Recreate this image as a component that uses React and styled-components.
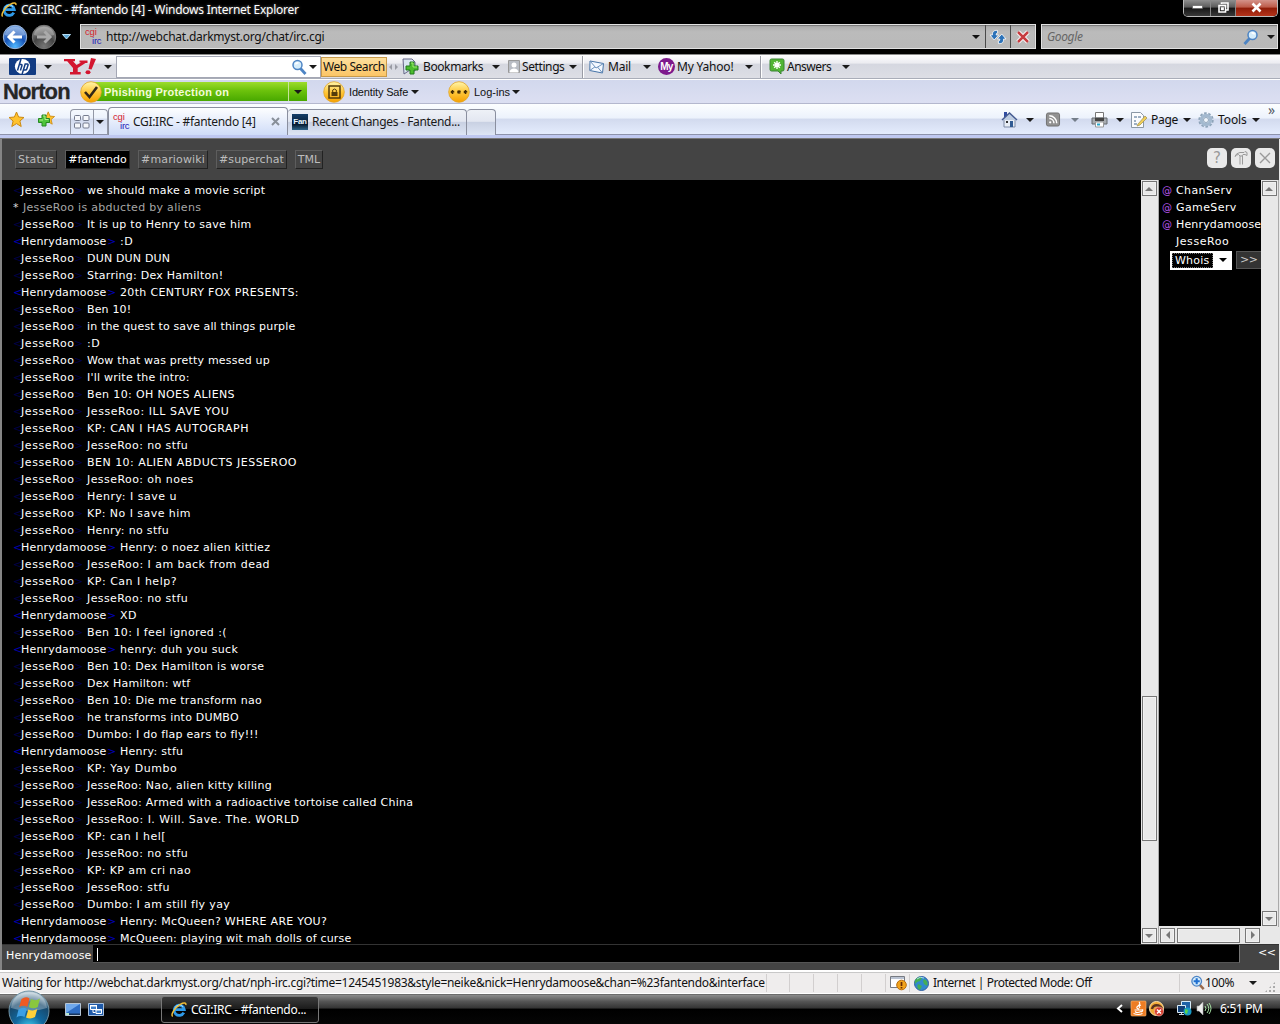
import React from "react";
import styled, { createGlobalStyle, css } from "styled-components";

const Global = createGlobalStyle`
  html, body { margin: 0; padding: 0; background: #000; overflow: hidden; }
  * { box-sizing: border-box; }
  svg { display: block; flex: none; overflow: visible; }
`;

const ui = `"Noto Sans", "Open Sans", "Liberation Sans", sans-serif`;
const verdana = `"DejaVu Sans", "Liberation Sans", sans-serif`;

const Screen = styled.div`
  width: 1280px; height: 1024px; display: flex; flex-direction: column;
  background: #000; overflow: hidden; font: 12px/16px ${ui}; color: #111; cursor: default;
`;
const Label = styled.span`
  display: block; flex: none; white-space: nowrap;
  width: ${p => p.$w ? p.$w + "px" : "auto"};
  letter-spacing: ${p => p.$ls || 0}px;
  font-size: ${p => p.$size || 12}px;
  font-style: ${p => p.$italic ? "italic" : "normal"};
  color: ${p => p.$color || "inherit"};
  margin-left: ${p => p.$ml || 0}px;
`;
const IconBox = styled.span`
  display: flex; flex: none; align-items: center; justify-content: center;
  width: ${p => p.$w || 16}px; margin-left: ${p => p.$ml || 0}px; padding-top: ${p => p.$pt || 0}px;
`;
const Caret = styled.i`
  flex: none; width: 0; height: 0; border: 4px solid transparent; border-bottom: 0;
  border-top-color: ${p => p.$color || "#1a1a1a"}; margin-left: ${p => p.$ml || 0}px;
`;

/* ---------- window frame ---------- */
const TitleBar = styled.header`
  height: 21px; flex: none; display: flex; align-items: flex-start; color: #fff; background: #000;
`;
const TitleText = styled.div`
  margin: 2px 0 0 4px; white-space: nowrap; font-size: 12px; letter-spacing: -0.25px; text-shadow: 0 0 3px #777;
`;
const WindowButtons = styled.div`
  display: flex; margin-left: auto; margin-right: 2px; height: 17px; border: 1px solid #bbb; border-top: 0;
  border-radius: 0 0 5px 5px; overflow: hidden;
`;
const WindowButton = styled.div`
  width: ${p => p.$w}px; display: flex; align-items: center; justify-content: center; padding-bottom: 2px;
  border-left: ${p => p.$first ? 0 : "1px solid #888"};
  background: ${p => p.$close
    ? "linear-gradient(#d4938a 0, #bd5a48 45%, #8f1c08 50%, #b5341b 100%)"
    : "linear-gradient(#8f8f8f 0, #5a5a5a 45%, #151515 50%, #3a3a3a 100%)"};
`;
const AddressRow = styled.div`
  height: 33px; flex: none; display: flex; align-items: flex-start; padding: 3px 2px 0 2px; background: #000;
`;
const Field = styled.div`
  height: 25px; display: flex; align-items: center; width: ${p => p.$w}px; flex: none;
  margin-left: ${p => p.$ml}px;
  border: 1px solid #e2e2e2; background: linear-gradient(#a9a9a9, #bbb 30%, #b9b9b9);
  box-shadow: inset 0 1px 1px #777;
`;
const FieldButton = styled.div`
  width: ${p => p.$w || 25}px; height: 23px; border-left: 1px solid #4a4a4a; display: flex; align-items: center; justify-content: center;
  margin-left: ${p => p.$ml || 0}px;
`;

/* ---------- toolbars ---------- */
const YahooBar = styled.div`
  height: 25px; flex: none; display: flex; align-items: center; border-top: 1px solid #8a8a8a; border-bottom: 1px solid #a9adb8;
  background: linear-gradient(#fdfdfe 0, #ececf1 35%, #d5d7e0 40%, #dddee5 100%);
`;
const YahooSearch = styled.div`
  width: 205px; height: 22px; margin-left: 4px; flex: none; background: #fff; border: 1px solid #a4a7b4;
  display: flex; align-items: center; justify-content: flex-end; padding-right: 3px;
`;
const WebSearch = styled.div`
  width: 66px; height: 20px; flex: none; border: 1px solid #c89a4a; background: linear-gradient(#fddf9d, #fbc566);
  padding-left: 1px; line-height: 17px; white-space: nowrap; letter-spacing: -0.45px;
`;
const Divider = styled.i`
  width: 2px; height: 22px; flex: none; background: #9a9ca5; border-right: 1px solid #fff; margin-left: ${p => p.$ml}px;
`;
const NortonBar = styled.div`
  height: 25px; flex: none; display: flex; align-items: center; border-top: 1px solid #fff; border-bottom: 1px solid #b4b8ce;
  background: linear-gradient(#d2d8ed, #dcdff2); font-family: "Liberation Sans", sans-serif;
`;
const NortonName = styled.div`
  width: 80px; padding-left: 3px; font: bold 22px/24px "Liberation Sans", sans-serif; letter-spacing: -0.9px; color: #262626;
  flex: none; -webkit-text-stroke: 0.3px #262626;
`;
const CoinOverlap = styled.span`
  display: flex; flex: none; width: 22px; position: relative; z-index: 1;
`;
const Phishing = styled.div`
  width: 216px; height: 19px; flex: none; margin-left: -11px; display: flex; align-items: center;
  background: linear-gradient(#9ddc2c, #6cc20c 45%, #48a800); color: #f3fbd8; font-weight: bold; font-size: 11px;
`;
const PhishingText = styled.span`
  width: 197px; padding-left: 13px; white-space: nowrap; letter-spacing: 0.22px; flex: none;
`;
const PhishingMenu = styled.span`
  height: 19px; width: 19px; border-left: 1px solid #c6e39a; display: flex; align-items: center; justify-content: center;
`;
const TabBar = styled.div`
  height: 31px; flex: none; display: flex; align-items: flex-start; border-bottom: 1px solid #8d93ab;
  background: linear-gradient(#fcfeff 0, #ecf2fc 47%, #d2daee 50%, #e4ecfd 100%);
`;
const TabEdge = styled.div`height: 4px; flex: none; background: #bfc8f0; border-bottom: 1px solid #777;`;
const QuickTabs = styled.div`
  display: flex; width: 38px; height: 26px; margin: 5px 0 0 15px; flex: none; border: 1px solid #9297a5; border-bottom: 0; border-radius: 4px 4px 0 0;
`;
const QuickCell = styled.div`
  width: ${p => p.$w}px; display: flex; align-items: center; justify-content: center; padding-bottom: 2px;
  border-left: ${p => p.$line ? "1px solid #9297a5" : 0};
`;
const Tab = styled.div`
  width: ${p => p.$w}px; height: ${p => p.$active ? 28 : 26}px; margin-top: ${p => p.$active ? 3 : 5}px; flex: none;
  display: flex; align-items: center; border: 1px solid #8a8f9f; border-bottom: 0; border-left-width: ${p => p.$active ? 1 : 0}px;
  border-radius: 4px 4px 0 0; color: #1a1a1a; padding-bottom: ${p => p.$active ? 0 : 1}px;
  background: ${p => p.$active ? "linear-gradient(#fdfeff, #cfdcf8)" : "linear-gradient(#eef1f7 0, #e3e7f1 45%, #c9d1e3 50%, #dde5f4 100%)"};
`;
const Commands = styled.div`
  display: flex; align-items: center; height: 31px; margin-left: auto; width: 279px; flex: none;
`;
const Chevrons = styled.span`align-self: flex-start; margin: -2px 0 0 8px; color: #555c66; font-size: 14px;`;

/* ---------- chat page ---------- */
const Page = styled.main`
  height: 831px; flex: none; border-left: 2px solid #858585; border-right: 1px solid #e8e8e8; background: #444; font: 11px/17px ${verdana};
  display: flex; flex-direction: column; color: #fff;
`;
const ChannelBar = styled.nav`
  height: 41px; flex: none; display: flex; align-items: center; padding: 0 4px 0 13px; gap: 8px;
`;
const Channel = styled.span`
  height: 19px; width: ${p => p.$w}px; border: 1px solid; border-color: #5d5d5d #222 #222 #5d5d5d; text-align: center; white-space: nowrap;
  line-height: 18px; color: ${p => p.$on ? "#fff" : "#bdbdbd"}; background: ${p => p.$on ? "#000" : "#444"};
  letter-spacing: ${p => p.$ls || 0}px;
`;
const PageTools = styled.div`display: flex; gap: 4px; margin: -3px 0 0 auto;`;
const PageTool = styled.span`
  width: 20px; height: 20px; border-radius: 5px; background: #e9e9e9; display: flex; align-items: center; justify-content: center;
  color: #999; font-size: 15px;
`;
const ChatArea = styled.div`display: flex; height: 764px; flex: none; background: #000;`;
const Log = styled.div`width: 1139px; flex: none; height: 764px; overflow: hidden; padding: 2px 0 0 11px;`;
const Line = styled.div`
  height: 17px; display: flex; white-space: nowrap; color: ${p => p.$action ? "#a6a6a6" : "#fff"}; letter-spacing: ${p => p.$action ? 0.3 : 0}px;
`;
const Bracket = styled.span`width: ${p => p.$close ? 9 : 8}px; flex: none; color: ${p => p.$dim ? "#000048" : "#0000b4"};`;
const Nick = styled.span`width: ${p => p.$long ? 86 : 53}px; flex: none; letter-spacing: ${p => p.$long ? 0.17 : 0.6}px;`;
const Said = styled.span`margin-left: 4px; letter-spacing: ${p => p.$ls}px;`;
const Star = styled.span`width: 10px; color: #ddd;`;

const scrollFace = css`border: 1px solid #777; background: #e9e9e9; box-shadow: inset 0 0 0 1px #f2f2f2;`;
const ScrollBar = styled.div`
  width: 18px; height: ${p => p.$h}px; flex: none; background: #e8e8e8; display: flex; flex-direction: column; align-items: center;
  padding: 1px 1px 1px 0; border-right: 1px solid #aaa;
`;
const ScrollButton = styled.span`
  ${scrollFace} width: 15px; height: 15px; flex: none; display: flex; align-items: center; justify-content: center;
`;
const ScrollThumb = styled.span`${scrollFace} width: 15px; height: 145px; margin-top: 500px; flex: none;`;
const Filler = styled.span`flex: 1;`;
const Corner = styled.div`display: flex; flex-direction: column; height: 764px; background: #e8e8e8;`;
const UserPane = styled.div`width: 102px; flex: none; display: flex; flex-direction: column; overflow: hidden;`;
const Users = styled.div`flex: 1; padding-top: 2px;`;
const User = styled.div`height: 17px; display: flex; padding-left: 3px; white-space: nowrap; letter-spacing: ${p => p.$ls || 0}px;`;
const Op = styled.span`width: 14px; flex: none; color: #b455e8; font-size: 10px; letter-spacing: 0;`;
const WhoisRow = styled.div`display: flex; padding: 0 0 0 11px; gap: 4px; height: 20px; align-items: center;`;
const Select = styled.span`
  width: 62px; height: 19px; flex: none; background: #fff; padding: 2px; display: flex; align-items: center;
`;
const Selected = styled.b`
  width: 41px; height: 15px; padding-left: 3px; background: #000; color: #fff; font-weight: normal; line-height: 15px; outline: 1px dotted #777; outline-offset: -1px;
  letter-spacing: 0.2px;
`;
const Go = styled.span`
  width: 30px; height: 18px; flex: none; background: #333; border: 1px solid #555; color: #ccc; line-height: 16px; padding-left: 3px; letter-spacing: -0.4px;
`;
const HorizontalScroll = styled.div`
  height: 18px; background: #e8e8e8; display: flex; align-items: center; padding-left: 1px; gap: 2px;
`;
const HorizontalThumb = styled.span`${scrollFace} width: 63px; height: 15px; margin-right: 3px;`;
const InputRow = styled.div`height: 26px; flex: none; display: flex; align-items: flex-start; border-top: 1px solid #333;`;
const InputNick = styled.span`width: 91px; padding: 2px 0 0 4px; flex: none; letter-spacing: 0.17px;`;
const Entry = styled.div`
  width: 1147px; height: 18px; flex: none; background: #000; border-right: 1px solid #777; border-bottom: 1px solid #555; padding: 3px 0 0 4px;
`;
const TextCursor = styled.i`display: block; width: 1px; height: 13px; background: #fff;`;
const Collapse = styled.span`margin-left: 18px; letter-spacing: -0.4px; line-height: 15px;`;

/* ---------- status and task bars ---------- */
const StatusBar = styled.footer`
  height: 24px; flex: none; display: flex; align-items: center; background: #efeded; border-top: 2px solid #fff; border-bottom: 1px solid #fff;
  box-shadow: inset 0 1px 0 #c8c8c8; padding-top: 1px;
`;
const StatusText = styled.span`
  width: 766px; flex: none; padding-left: 2px; white-space: nowrap; letter-spacing: -0.29px;
`;
const StatusCell = styled.span`
  width: ${p => p.$w || 24}px; height: 18px; flex: none; border-left: 1px solid #d2cfcf; display: flex; align-items: center; white-space: nowrap;
  padding-left: ${p => p.$pl || 0}px;
`;
const Grip = styled.span`
  width: 10px; height: 10px; margin-left: 8px; align-self: flex-end;
  background: radial-gradient(circle at 1px 1px, #aaa 1px, transparent 1.2px) 0 0 / 4px 4px; clip-path: polygon(100% 0, 100% 100%, 0 100%);
`;
const TaskBar = styled.div`
  height: 30px; flex: none; display: flex; align-items: center; color: #fff;
  background: linear-gradient(#555 0, #8a8a8a 4%, #555 25%, #333 47%, #000 50%, #050505 100%);
`;
const Start = styled.div`width: 44px; height: 30px; margin-left: 8px; flex: none; position: relative; z-index: 1;`;
const StartOrb = styled.span`position: absolute; left: 0; bottom: -8px;`;
const TaskButton = styled.div`
  width: 158px; height: 27px; margin-left: 57px; flex: none; border: 1px solid #777; border-radius: 3px; display: flex; align-items: center;
  padding: 1px 0 0 9px; background: linear-gradient(#3c3c3c, #1b1b1b 47%, #000 50%, #111);
`;
const Tray = styled.div`display: flex; align-items: center; margin-left: auto; width: 164px; flex: none; height: 26px; padding-bottom: 1px;`;

/* ---------- icons ---------- */
const IE = ({ s = 16 }) => (
  <svg width={s} height={s} viewBox="0 0 16 16" fill="none">
    <path d="M12.8 10.6a5.1 5.1 0 1 1 .5-3H4.5" stroke="#2f9ae8" strokeWidth="2.8" />
    <path d="M12 4.7a4.8 4.8 0 0 0-8.3 1.8" stroke="#a5e0ff" strokeWidth="1" />
    <path d="M1.7 14.5C-.6 12.8 3.8 5.5 9.3 2.3 12.5.4 15.4.4 14.8 3" stroke="#f0bd38" strokeWidth="1.5" />
  </svg>
);
const NavCircle = ({ dim }) => (
  <svg width="26" height="26" viewBox="0 0 26 26">
    <defs>
      <radialGradient id={dim ? "nd" : "nb"} cx=".5" cy=".9" r=".9">
        <stop offset="0" stopColor={dim ? "#777" : "#50b8ff"} /><stop offset=".5" stopColor={dim ? "#444" : "#1853b5"} />
        <stop offset="1" stopColor={dim ? "#999" : "#7aa8e6"} />
      </radialGradient>
    </defs>
    <circle cx="13" cy="13" r="11.7" fill={`url(#${dim ? "nd" : "nb"})`} stroke={dim ? "#777" : "#9fb7d8"} />
    <path d="M3 11C4 0 22 0 23 11Q13 14 3 11" fill="#fff" opacity=".28" />
    <path d={dim ? "M6 13h13M13.5 7.5 19 13l-5.500 5.500" : "M20 13H7M12.500 7.500 7 13l5.500 5.500"} fill="none" stroke={dim ? "#aaa" : "#fff"} strokeWidth="3" />
  </svg>
);
const CgiMark = styled.span`
  display: grid; grid-template-rows: 9px 8px; width: 18px; flex: none; margin-left: ${p => p.$ml || 0}px;
  font: 9.500px/8px "Liberation Sans", sans-serif; color: #d5222e; letter-spacing: -0.2px;
  & > i { font-style: normal; color: #1e20b8; padding-left: 7px; }
`;
const Cgi = ({ ml }) => <CgiMark $ml={ml}>cgi<i>irc</i></CgiMark>;
const MirrorBox = styled.span`display: flex; transform: ${p => p.$flip ? "scaleX(-1)" : "none"};`;
const Magnifier = ({ c = "#4d84c4", flip, plus }) => (
  <MirrorBox $flip={flip}>
    <svg width={plus ? 14 : 16} height={plus ? 14 : 16} viewBox="0 0 16 16" fill="none">
      <path d="M9.500 9.500 14.500 15" stroke={plus ? "#9a6a4a" : c} strokeWidth="2.800" />
      <circle cx="6.500" cy="6" r={plus ? 5.5 : 4.5} fill="#d6edfb" stroke={c} strokeWidth="1.500" />
      {plus ? <path d="M6.500 2.500v7M3 6h7" stroke="#1f6fd0" strokeWidth="2.400" /> : <path d="M4.500 5.500a2.500 2.500 0 0 1 3-1.500" stroke="#fff" strokeWidth="1.500" />}
    </svg>
  </MirrorBox>
);
const Refresh = () => (
  <svg width="16" height="14" viewBox="0 0 16 14" stroke="#fff" strokeWidth=".8" fill="#2c72b8">
    <path d="M7.500.500C4 0 2.300 1.500 2.400 5H0l4.200 5L8.700 5H6.200c0-1.500.3-2 1.500-2z" />
    <path d="M8.500 13.500c3.500.5 5.200-1 5.100-4.500H16l-4.200-5L7.300 9h2.500c0 1.500-.3 2-1.500 2z" />
  </svg>
);
const Stop = () => (
  <svg width="14" height="14" viewBox="0 0 14 14"><path d="M2 2l10 10M12 2 2 12" stroke="#fff" strokeWidth="4.500" /><path d="M2 2l10 10M12 2 2 12" stroke="#c63c40" strokeWidth="2.500" /></svg>
);
const HpLogo = () => (
  <svg width="27" height="17" viewBox="0 0 27 17">
    <rect width="27" height="17" rx="1" fill="#123c83" /><circle cx="13.500" cy="8.500" r="7.600" fill="#fff" />
    <g fill="none" stroke="#123c83" strokeWidth="1.500"><path d="M12 1 8.500 12.500M10.200 6.500h2.100q1 0 .6 1.300l-1.500 4.700" /><path d="M13 16.500 16.200 6h2.100q1.100 0 .7 1.300l-1.200 3.700q-.3 1-1.400 1h-1.600" /></g>
  </svg>
);
const YahooLogo = () => (
  <svg width="32" height="17" viewBox="0 0 32 17" fill="#d3152f">
    <path d="M0 1h11v2.300H9L12.500 7 17 4.500h-1.500V2.500h8V5h-2L13.700 10v4h3v2.500H6V14h3v-4L3.200 3.300H0zM27 0l5 1-4.500 10.500-3-.5z" />
    <ellipse cx="24" cy="14.300" rx="2.500" ry="2" />
  </svg>
);
const Bookmark = () => (
  <svg width="17" height="17" viewBox="0 0 17 17"><path d="M1 1h9l3 3v9l-5-1-6 4z" fill="#d8e6f0" stroke="#668" /><path d="M8 4h4v4h4v4h-4v4H8v-4H4V8h4z" fill="#4bbd2c" stroke="#237b1d" /><path d="M9 5h2v4h4" fill="none" stroke="#a0eb70" /></svg>
);
const Bust = () => (
  <svg width="12" height="13" viewBox="0 0 12 13"><path d="M.5.500h11v12H.5z" fill="#b9bdc4" stroke="#999" /><circle cx="6" cy="5" r="2.500" fill="#fff" /><path d="M1.500 12.500c0-5.500 9-5.500 9 0z" fill="#fff" /></svg>
);
const Mail = () => (
  <svg width="16" height="16" viewBox="0 0 16 16"><path d="M1 2 14.500 4.500 13.500 14 .8 11.500z" fill="#f3f8ff" stroke="#4774a8" /><path d="m1 2 6 7 7.500-4.500M.8 11.500 6 7.800M13.500 14 8.500 8" fill="none" stroke="#6c91bc" /></svg>
);
const Badge = styled.span`
  width: 17px; height: 17px; border-radius: 50%; background: #7d198c; color: #fff; font: bold 10px/17px "Liberation Sans", sans-serif; text-align: center; letter-spacing: -0.6px;
`;
const AnswersIcon = () => (
  <svg width="16" height="17" viewBox="0 0 16 17"><path d="M2.500 1h11q1.500 0 1.500 1.500v9q0 1.500-1.500 1.500H12v3l-3-3H2.500Q1 13 1 11.500v-9Q1 1 2.500 1" fill="#52b535" stroke="#3b8434" /><path d="M8 3v8M4 7h8M5.200 4.200l5.600 5.600M10.800 4.200 5.200 9.800" stroke="#fff" strokeWidth="1.400" /></svg>
);
const GoldCoin = ({ children }) => (
  <svg width="22" height="22" viewBox="0 0 22 22">
    <defs><linearGradient id="gold" x2="0" y2="1"><stop stopColor="#fff6ac" /><stop offset=".5" stopColor="#ffc83c" /><stop offset="1" stopColor="#f6a000" /></linearGradient></defs>
    <circle cx="11" cy="11" r="10.300" fill="url(#gold)" stroke="#e2a526" strokeWidth=".8" />{children}
  </svg>
);
const Star5 = ({ plus }) => (
  <svg width="17" height="17" viewBox="0 0 17 17">
    <path d="m8.500 1 2.100 5 5.400.5-4.100 3.500 1.300 5.500-4.700-2.900-4.700 2.900 1.300-5.500L1 6.500 6.400 6z" fill="#ffc22e" stroke="#cc8a12" transform={plus ? "translate(3 0) scale(.85)" : undefined} />
    {plus && <path d="M4 4h4v3.500h3.500v4H8V15H4v-3.500H.5v-4H4z" fill="#4fc53c" stroke="#248822" />}
    {plus && <path d="M5 5h2v3.500h3.500M1.500 9H5" fill="none" stroke="#b4ee8e" />}
  </svg>
);
const Grid = () => (
  <svg width="16" height="14" viewBox="0 0 16 14" fill="#f5f7fb" stroke="#747b8e"><rect x=".5" y=".5" width="6" height="5" rx="1" /><rect x="9" y=".5" width="6" height="5" rx="1" /><rect x=".5" y="8" width="6" height="5" rx="1" /><rect x="9" y="8" width="6" height="5" rx="1" /></svg>
);
const FanBadge = styled.span`
  width: 16px; height: 16px; background: linear-gradient(#163f68, #061b31 65%, #31668a); color: #eaf7ff; font: bold 8px/16px "Liberation Sans", sans-serif; text-align: center; margin-left: 4px; flex: none; letter-spacing: -0.3px;
`;
const Home = () => (
  <svg width="17" height="17" viewBox="0 0 17 17"><path d="M3 8h11v8H3z" fill="#e8edf5" stroke="#7c8aa5" /><path d="M3 1h3v5H3z" fill="#304ca0" /><path d="M1 9 8.500 2 16 9" fill="#bccbe0" stroke="#455b91" strokeWidth="1.500" /><path d="M9 10h3v6H9z" fill="#315b94" /><path d="M5 10h2v2H5z" fill="#333" /></svg>
);
const Feed = () => (
  <svg width="14" height="15" viewBox="0 0 15 15"><rect x=".5" y=".5" width="14" height="14" rx="2" fill="#919191" stroke="#6e6e6e" /><circle cx="4.500" cy="10.500" r="1.200" fill="#fff" /><path d="M3.500 6.500a5 5 0 0 1 5 5M3.500 3.500a8 8 0 0 1 8 8" fill="none" stroke="#fff" strokeWidth="1.600" /></svg>
);
const Printer = () => (
  <svg width="17" height="16" viewBox="0 0 17 16"><path d="M4.500.5h8V6h-8z" fill="#fff" stroke="#777" /><path d="M1 6h15v6H1z" fill="#a9adb2" stroke="#656b70" /><path d="M4 6h9v3H4z" fill="#444" /><path d="M4.500 10h8v5h-8z" fill="#fff" stroke="#999" /><path d="M6 12.500h3" stroke="#25a4c9" strokeWidth="2" /></svg>
);
const PageIcon = () => (
  <svg width="16" height="16" viewBox="0 0 16 16"><path d="M.5.500h9l3 3v12H.5z" fill="#fbfcfd" stroke="#8b98a5" /><path d="M3 5h3M3 9h2M3 12h3M7 5h3" stroke="#8096b0" strokeWidth="1.500" /><path d="m7 12 7-8 2 2-7 7-3 1z" fill="#f1cf58" stroke="#9d8f50" strokeWidth=".7" /></svg>
);
const Gear = () => (
  <svg width="16" height="16" viewBox="0 0 16 16"><circle cx="8" cy="8" r="6.800" fill="none" stroke="#8da3b8" strokeWidth="1.800" strokeDasharray="2.600 1.670" /><circle cx="8" cy="8" r="4.600" fill="#d9e6f1" stroke="#a3b9cf" strokeWidth="3.200" /><circle cx="8" cy="8" r="2.500" fill="#f0f6fc" stroke="#7d93ab" strokeWidth=".8" /></svg>
);
const Triangle = ({ turn = 0 }) => (
  <svg width="8" height="8" viewBox="0 0 8 8"><path d="M0 6 4 2l4 4z" fill="#777" transform={`rotate(${turn} 4 4)`} /></svg>
);
const Globe = () => (
  <svg width="15" height="15" viewBox="0 0 15 15"><circle cx="7.500" cy="7.500" r="7" fill="#3189cc" stroke="#315fa2" /><path d="M3 2q4-2 5 0l-2 3-3 1-2 2Q0 4 3 2M4 8l4 2-2 4Q2 12 4 8M10 3q5 2 3 7l-3-2-1-3z" fill="#45ae55" /><path d="M3 3Q6 0 10 2" fill="none" stroke="#c7edff" opacity=".8" /></svg>
);
const BlockedPage = () => (
  <svg width="17" height="16" viewBox="0 0 17 16"><path d="M.5 1.500h14v11H.5z" fill="#fff" stroke="#777b82" /><path d="M1 2h13v2H1z" fill="#bac3d3" /><circle cx="11.500" cy="10" r="4.800" fill="#f2a31b" stroke="#b86c0d" /><path d="M11.500 7v4M11.500 12v1.400" stroke="#6a2c05" strokeWidth="1.700" /></svg>
);
const WindowsOrb = () => (
  <svg width="42" height="42" viewBox="0 0 42 42">
    <defs><radialGradient id="orb" cx=".5" cy=".95" r=".9"><stop stopColor="#42d6f5" /><stop offset=".4" stopColor="#11689f" /><stop offset=".75" stopColor="#17496d" /><stop offset="1" stopColor="#b8cbd6" /></radialGradient></defs>
    <circle cx="21" cy="21" r="20" fill="url(#orb)" stroke="#7193a5" />
    <path d="M3 18C5-3 37-3 39 18Q21 24 3 18" fill="#fff" opacity=".3" />
    <path d="M13.500 9q4.500-3 8-.5l-2.200 8.500q-4.500-2.500-8.200.3z" fill="#ee5a24" /><path d="M23 9q4.500 2.500 9-.5L29.800 17q-4.500 2.500-9 0z" fill="#89c73d" />
    <path d="M10.500 19.500q4.500-3 8.300-.5l-2.300 8q-4-2.200-8 .5z" fill="#3c9fe5" /><path d="M20.300 19.500q4.500 2.200 9-.5l-2.300 8q-4.300 2.500-9 .5z" fill="#ffd03a" />
  </svg>
);
const Desktop = () => (
  <svg width="16" height="13" viewBox="0 0 16 13"><path d="M.5.500h15v12H.5z" fill="#2f6ec5" stroke="#b6c5d4" /><path d="M1 1h14L1 10z" fill="#70a9ec" /><path d="M1 10.500h14v1.500H1z" fill="#17345c" /><path d="M1 10h3v2H1z" fill="#b7e8cb" /></svg>
);
const Switcher = () => (
  <svg width="16" height="13" viewBox="0 0 16 13"><path d="M.5.500h15v12H.5z" fill="#1f5aa9" stroke="#a7bfdb" /><path d="M2.500 2.500h6v4h-6zM8 6.500h5.500v4H8z" fill="#3d7ec9" stroke="#fff" /><path d="M2 2h7v1.500H2zM7.500 6h6.500v1.500H7.500z" fill="#fff" /><path d="M5 7v2.500h2.500" fill="none" stroke="#fff" /></svg>
);
const Java = () => (
  <svg width="15" height="15" viewBox="0 0 15 15"><rect width="15" height="15" rx="1" fill="#ed7d24" stroke="#ffbd73" strokeWidth=".6" /><path d="M8 1q2 2-1 4t1 3M10 4Q7 5 9 7M3.500 9h7q2-1 1 1l-1.500 1M4 10.500q2 2 6 0M2.500 12.500q5 2 9 0" fill="none" stroke="#fff" strokeWidth="1.100" /></svg>
);
const NortonTray = () => (
  <svg width="16" height="16" viewBox="0 0 16 16"><circle cx="7.500" cy="7.500" r="7" fill="#f1aa37" stroke="#ffe5ae" /><path d="M3 8c1-5 8-5 10 0" stroke="#5b331d" strokeWidth="2.400" fill="none" /><circle cx="10" cy="10.500" r="4.500" fill="#d53a2b" stroke="#f2b5a7" strokeWidth=".7" /><path d="m8 8.500 4 4m0-4-4 4" stroke="#fff" strokeWidth="1.500" /></svg>
);
const Network = () => (
  <svg width="15" height="15" viewBox="0 0 15 15"><path d="M4.500.500h9v8h-9z" fill="#1f63a7" stroke="#d8ebf7" /><path d="M.5 4.500h8v7h-8z" fill="#123f76" stroke="#d8ebf7" /><path d="M2 13.500h5M4.500 12v2" stroke="#c8d9e3" /><circle cx="10.500" cy="10.500" r="4" fill="#1998c4" /><path d="m8 8 3 1-1 4-2-1z" fill="#5dd64b" /></svg>
);
const Speaker = () => (
  <svg width="15" height="15" viewBox="0 0 15 15"><path d="M1 5h2l4-4v13l-4-4H1z" fill="#eee" stroke="#aaa" strokeWidth=".6" /><path d="M9 5q2 2.500 0 5M11 3q3.500 4.500 0 9M13 2q4 5.500 0 11" fill="none" stroke="#a9e5a6" /></svg>
);

const J = "JesseRoo", H = "Henrydamoose";
const lines = [
  [J, "we should make a movie script", 0.25], ["*", "JesseRoo is abducted by aliens"], [J, "It is up to Henry to save him", 0.28], [H, ":D", 0.5],
  [J, "DUN DUN DUN", 0.18], [J, "Starring: Dex Hamilton!", 0.26], [H, "20th CENTURY FOX PRESENTS:", 0.35], [J, "Ben 10!", 0.15],
  [J, "in the quest to save all things purple", 0.16], [J, ":D", 0.5], [J, "Wow that was pretty messed up", 0.2], [J, "I'll write the intro:", 0.24],
  [J, "Ben 10: OH NOES ALIENS", 0.37], [J, "JesseRoo: ILL SAVE YOU", 0.57], [J, "KP: CAN I HAS AUTOGRAPH", 0.52], [J, "JesseRoo: no stfu", 0.41],
  [J, "BEN 10: ALIEN ABDUCTS JESSEROO", 0.48], [J, "JesseRoo: oh noes", 0.43], [J, "Henry: I save u", 0.5], [J, "KP: No I save him", 0.45], [J, "Henry: no stfu", 0.32],
  [H, "Henry: o noez alien kittiez", 0.26], [J, "JesseRoo: I am back from dead", 0.45], [J, "KP: Can I help?", 0.52], [J, "JesseRoo: no stfu", 0.41], [H, "XD", 0.5],
  [J, "Ben 10: I feel ignored :(", 0.4], [H, "henry: duh you suck", 0.36], [J, "Ben 10: Dex Hamilton is worse", 0.27], [J, "Dex Hamilton: wtf", 0.24],
  [J, "Ben 10: Die me transform nao", 0.3], [J, "he transforms into DUMBO", 0.2], [J, "Dumbo: I do flap ears to fly!!!", 0.26], [H, "Henry: stfu", 0.27],
  [J, "KP: Yay Dumbo", 0.58], [J, "JesseRoo: Nao, alien kitty killing", 0.28], [J, "JesseRoo: Armed with a radioactive tortoise called China", 0.27],
  [J, "JesseRoo: I. Will. Save. The. WORLD", 0.46], [J, "KP: can I hel[", 0.5], [J, "JesseRoo: no stfu", 0.41], [J, "KP: KP am cri nao", 0.42], [J, "JesseRoo: stfu", 0.42],
  [J, "Dumbo: I am still fly yay", 0.36], [H, "Henry: McQueen? WHERE ARE YOU?", 0.27], [H, "McQueen: playing wit mah dolls of curse", 0.2],
];

function ChatLine({ who, text, spacing }) {
  if (who === "*") return <Line $action><Star>*</Star>{text}</Line>;
  return (
    <Line>
      <Bracket $dim={who === J}>&lt;</Bracket><Nick $long={who === H}>{who}</Nick>
      <Bracket $close $dim={who === J}>&gt;</Bracket><Said $ls={spacing}>{text}</Said>
    </Line>
  );
}

export default function App() {
  return (
    <Screen>
      <Global />
      <TitleBar>
        <IconBox $ml={1} $pt={2}><IE /></IconBox>
        <TitleText>CGI:IRC - #fantendo [4] - Windows Internet Explorer</TitleText>
        <WindowButtons>
          <WindowButton $w={26} $first><svg width="11" height="4"><path d="M.5.500h10v3H.5z" fill="#fff" stroke="#555" strokeWidth=".6" /></svg></WindowButton>
          <WindowButton $w={25}><svg width="11" height="11" fill="none" stroke="#fff" strokeWidth="1.600"><path d="M3.500 2V1H10v7H8" /><path d="M1 3.500h6.500V10H1zM3.600 6h1.500v1.500H3.600z" /></svg></WindowButton>
          <WindowButton $w={42} $close><svg width="11" height="9"><path d="m1.500.5 8 8m0-8-8 8" stroke="#fff" strokeWidth="2.600" /></svg></WindowButton>
        </WindowButtons>
      </TitleBar>
      <AddressRow>
        <IconBox $w={26}><NavCircle /></IconBox>
        <IconBox $w={26} $ml={3}><NavCircle dim /></IconBox>
        <IconBox $w={10} $ml={4} $pt={10}><svg width="9" height="6"><path d="M.5.500h8L4.500 5z" fill="#5da9d8" stroke="#b6def5" strokeWidth="1" /></svg></IconBox>
        <Field $w={956} $ml={9}>
          <Cgi ml={4} />
          <Label $w={866} $ml={3} $ls={-0.25}>http://webchat.darkmyst.org/chat/irc.cgi</Label>
          <Caret $color="#111" /><FieldButton $w={25} $ml={5}><Refresh /></FieldButton><FieldButton $w={26}><Stop /></FieldButton>
        </Field>
        <Field $w={237} $ml={5}>
          <Label $w={196} $ml={5} $ls={-0.35} $color="#666" $italic>Google</Label>
          <Magnifier flip /><Caret $ml={8} />
        </Field>
      </AddressRow>
      <YahooBar>
        <IconBox $w={27} $ml={9}><HpLogo /></IconBox><Caret $ml={8} />
        <IconBox $w={32} $ml={12}><YahooLogo /></IconBox><Caret $ml={8} />
        <YahooSearch><Magnifier /><Caret $ml={2} /></YahooSearch>
        <WebSearch>Web Search</WebSearch>
        <IconBox $w={11} $ml={1}><svg width="9" height="6" fill="#9a9ca5"><path d="M3 0v6L0 3zM6 0v6l3-3z" /></svg></IconBox>
        <IconBox $w={17} $ml={3}><Bookmark /></IconBox><Label $w={69} $ml={4} $ls={-0.4}>Bookmarks</Label><Caret />
        <IconBox $w={12} $ml={8}><Bust /></IconBox><Label $w={47} $ml={2} $ls={-0.4}>Settings</Label><Caret />
        <Divider $ml={5} />
        <IconBox $ml={5}><Mail /></IconBox><Label $w={37} $ml={3} $ls={-0.2}>Mail</Label><Caret $ml={-2} />
        <IconBox $w={17} $ml={7}><Badge>My</Badge></IconBox><Label $w={69} $ml={2} $ls={-0.2}>My Yahoo!</Label><Caret $ml={-1} />
        <Divider $ml={7} />
        <IconBox $ml={7}><AnswersIcon /></IconBox><Label $w={56} $ml={2} $ls={-0.5}>Answers</Label><Caret $ml={-1} />
      </YahooBar>
      <NortonBar>
        <NortonName>Norton</NortonName>
        <CoinOverlap><GoldCoin><path d="m5 11 4.500 5L17 6" fill="none" stroke="#322617" strokeWidth="2.600" /></GoldCoin></CoinOverlap>
        <Phishing><PhishingText>Phishing Protection on</PhishingText><PhishingMenu><Caret /></PhishingMenu></Phishing>
        <IconBox $w={22} $ml={16}><GoldCoin><path d="M6 5h11v12H6z" fill="none" stroke="#543d0b" strokeWidth="1.500" /><path d="M8.500 11h6v4h-6z" fill="#543d0b" /><path d="M9.700 11V9q1.800-2 3.600 0v2" fill="none" stroke="#543d0b" /></GoldCoin></IconBox>
        <Label $w={63} $ml={4} $size={11} $ls={-0.15}>Identity Safe</Label><Caret $ml={-1} />
        <IconBox $w={22} $ml={29}><GoldCoin><path d="M4.500 9v4M2.800 10l3.400 2M2.800 12l3.400-2M11 9v4M9.300 10l3.400 2M9.300 12l3.400-2M17.500 9v4M15.800 10l3.400 2M15.800 12l3.400-2" stroke="#432b04" strokeWidth="1.100" /></GoldCoin></IconBox>
        <Label $w={39} $ml={4} $size={11}>Log-ins</Label><Caret $ml={-1} />
      </NortonBar>
      <TabBar>
        <IconBox $w={17} $ml={8} $pt={7}><Star5 /></IconBox>
        <IconBox $w={17} $ml={13} $pt={7}><Star5 plus /></IconBox>
        <QuickTabs><QuickCell $w={23}><Grid /></QuickCell><QuickCell $w={15} $line><Caret /></QuickCell></QuickTabs>
        <Tab $w={180} $active><Cgi ml={4} /><Label $w={138} $ml={2} $ls={-0.31}>CGI:IRC - #fantendo [4]</Label><svg width="9" height="9"><path d="m1 1 7 7m0-7-7 7" stroke="#888f99" strokeWidth="2" /></svg></Tab>
        <Tab $w={179}><FanBadge>Fan</FanBadge><Label $w={150} $ml={4} $ls={-0.33}>Recent Changes - Fantend...</Label></Tab>
        <Tab $w={29} />
        <Commands>
          <Home /><Caret $ml={8} />
          <IconBox $ml={11}><Feed /></IconBox><Caret $ml={10} $color="#747e89" />
          <IconBox $w={17} $ml={12}><Printer /></IconBox><Caret $ml={8} />
          <IconBox $ml={7}><PageIcon /></IconBox><Label $w={31} $ml={4} $ls={-0.25}>Page</Label><Caret $ml={1} />
          <IconBox $ml={7}><Gear /></IconBox><Label $w={33} $ml={4} $ls={-0.1}>Tools</Label><Caret $ml={1} />
          <Chevrons>»</Chevrons>
        </Commands>
      </TabBar>
      <TabEdge />
      <Page>
        <ChannelBar>
          <Channel $w={42} $ls={0.15}>Status</Channel><Channel $w={65}  $on>#fantendo</Channel><Channel $w={70} $ls={0.15}>#mariowiki</Channel><Channel $w={71} $ls={0.1}>#superchat</Channel><Channel $w={28}>TML</Channel>
          <PageTools>
            <PageTool>?</PageTool>
            <PageTool><svg width="14" height="14" fill="none" stroke="#999"><path d="M1 5.500Q2 2 6 1.500h4l1-1 2 1v3l-2-1H9L8 5H6L4.500 3.500Q2.500 3.500 1 5.500M6 5v8.500M8.500 5v8.500" /></svg></PageTool>
            <PageTool><svg width="12" height="12"><path d="m1 1 10 10m0-10L1 11" stroke="#999" strokeWidth="1.400" /></svg></PageTool>
          </PageTools>
        </ChannelBar>
        <ChatArea>
          <Log>{lines.map(([who, text, spacing], i) => <ChatLine key={i} who={who} text={text} spacing={spacing} />)}</Log>
          <ScrollBar $h={764}><ScrollButton><Triangle /></ScrollButton><ScrollThumb /><Filler /><ScrollButton><Triangle turn={180} /></ScrollButton></ScrollBar>
          <UserPane>
            <Users>
              <User $ls={0.4}><Op>@</Op>ChanServ</User><User $ls={0.4}><Op>@</Op>GameServ</User><User $ls={0.15}><Op>@</Op>Henrydamoose</User><User $ls={0.55}><Op />JesseRoo</User>
              <WhoisRow><Select><Selected>Whois</Selected><Caret $ml={6} $color="#000" /></Select><Go>&gt;&gt;</Go></WhoisRow>
            </Users>
            <HorizontalScroll><ScrollButton><Triangle turn={-90} /></ScrollButton><HorizontalThumb /><ScrollButton><Triangle turn={90} /></ScrollButton></HorizontalScroll>
          </UserPane>
          <Corner><ScrollBar $h={747}><ScrollButton><Triangle /></ScrollButton><Filler /><ScrollButton><Triangle turn={180} /></ScrollButton></ScrollBar></Corner>
        </ChatArea>
        <InputRow><InputNick>Henrydamoose</InputNick><Entry><TextCursor /></Entry><Collapse>&lt;&lt;</Collapse></InputRow>
      </Page>
      <StatusBar>
        <StatusText>Waiting for http://webchat.darkmyst.org/chat/nph-irc.cgi?time=1245451983&amp;style=neike&amp;nick=Henrydamoose&amp;chan=%23fantendo&amp;interface</StatusText>
        <StatusCell $w={23} /><StatusCell /><StatusCell /><StatusCell /><StatusCell />
        <StatusCell $pl={4}><BlockedPage /></StatusCell>
        <StatusCell $w={270} $pl={4}><Globe /><Label $ml={4} $ls={-0.48}>Internet | Protected Mode: Off</Label></StatusCell>
        <StatusCell $w={100} $pl={11}><Magnifier plus /><Label $w={46} $ls={-0.4}>100%</Label><Caret $ml={-2} /><Grip /></StatusCell>
      </StatusBar>
      <TaskBar>
        <Start><StartOrb><WindowsOrb /></StartOrb></Start>
        <IconBox $ml={13}><Desktop /></IconBox><IconBox $ml={7}><Switcher /></IconBox>
        <TaskButton><IE /><Label $ml={4} $ls={-0.28}>CGI:IRC - #fantendo...</Label></TaskButton>
        <Tray>
          <svg width="7" height="9"><path d="m6 1-4 3.500L6 8" fill="none" stroke="#fff" strokeWidth="2" /></svg>
          <IconBox $ml={8} $w={15}><Java /></IconBox><IconBox $ml={3}><NortonTray /></IconBox>
          <IconBox $ml={12} $w={15}><Network /></IconBox><IconBox $ml={4} $w={15}><Speaker /></IconBox>
          <Label $ml={9} $ls={-0.35}>6:51 PM</Label>
        </Tray>
      </TaskBar>
    </Screen>
  );
}
